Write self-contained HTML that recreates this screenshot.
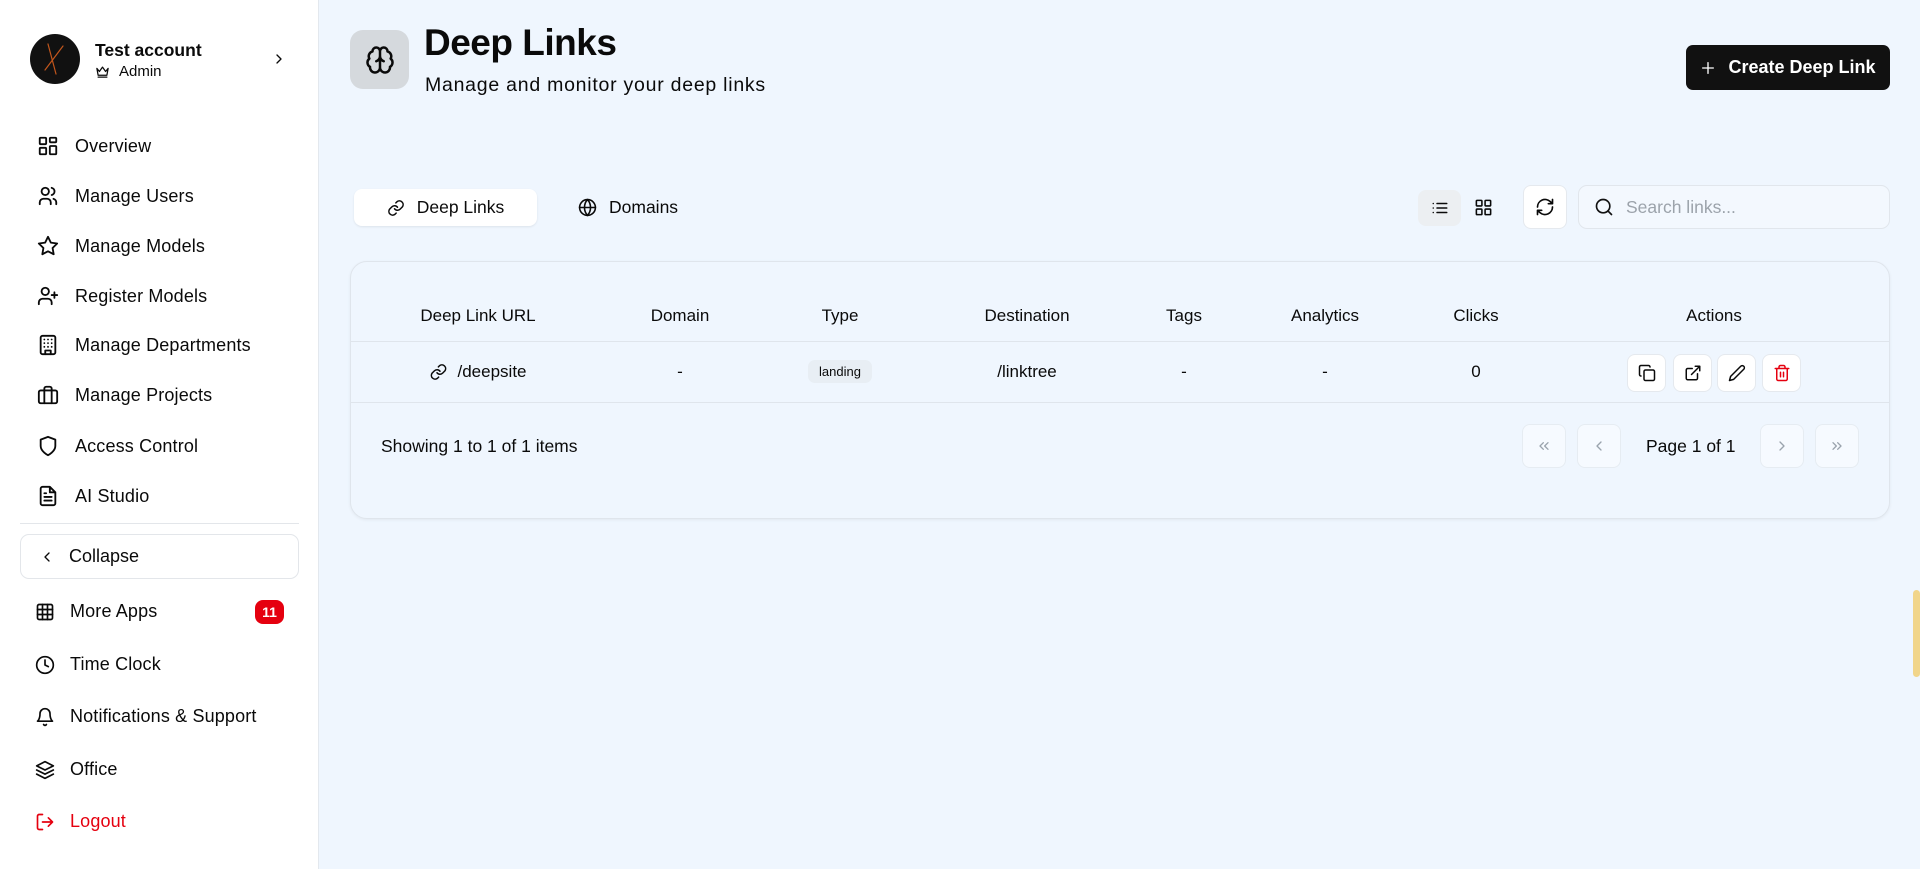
<!DOCTYPE html>
<html><head><meta charset="utf-8"><style>
*{box-sizing:border-box;margin:0;padding:0}
body{width:1920px;height:869px;overflow:hidden;background:#eff6fe;font-family:"Liberation Sans",sans-serif;color:#0a0a0a;position:relative}
.a{position:absolute}
.side{left:0;top:0;width:319px;height:869px;background:#fff;border-right:1px solid #e3e8ee}
svg{fill:none;stroke:currentColor;stroke-width:2;stroke-linecap:round;stroke-linejoin:round}
.nav{left:37px;height:24px;display:flex;align-items:center;font-size:18px;letter-spacing:0.15px}
.nav svg{width:22px;height:22px;margin-right:16px}
.nav2{left:35px;display:flex;align-items:center;font-size:18px;font-weight:500;letter-spacing:0.15px}
.nav2 svg{width:20px;height:20px;margin-right:15px}
.th{top:306px;font-size:17px;font-weight:500;transform:translateX(-50%);white-space:nowrap}
.td{top:362px;font-size:17px;transform:translateX(-50%);white-space:nowrap}
.btn{background:#fff;border:1px solid #e5e9ee;border-radius:8px;display:flex;align-items:center;justify-content:center}
.pg{background:#f6faff;border:1px solid #e6ecf2;border-radius:8px;width:44px;height:44px;top:424px;display:flex;align-items:center;justify-content:center;color:#9aa3ad}
</style></head><body>
<div class="a side"></div>
<div class="a" style="left:30px;top:34px;width:50px;height:50px;border-radius:50%;background:#111"><svg width="50" height="50" viewBox="0 0 50 50" style="stroke:#c2561c;stroke-width:1.2"><path d="M18 10 L26 40 M33 12 L15 36"/></svg></div>
<div class="a" style="left:95px;top:40px;font-size:17.5px;font-weight:700">Test account</div>
<div class="a" style="left:95px;top:63px;font-size:15px;display:flex;align-items:center"><svg width="15" height="15" viewBox="0 0 24 24"><path d="M3 7l4 5 5-7 5 7 4-5-2 11H5z M5 21h14"/></svg><span style="margin-left:9px">Admin</span></div>
<svg class="a" style="left:271px;top:51px" width="16" height="16" viewBox="0 0 24 24"><path d="M9 6l6 6-6 6"/></svg>

<div class="a nav" style="top:134px"><svg viewBox="0 0 24 24"><rect x="3" y="3" width="7" height="7" rx="1"/><rect x="14" y="3" width="7" height="5" rx="1"/><rect x="14" y="12" width="7" height="9" rx="1"/><rect x="3" y="14" width="7" height="7" rx="1"/></svg>Overview</div>
<div class="a nav" style="top:184px"><svg viewBox="0 0 24 24"><circle cx="9" cy="7" r="4"/><path d="M3 21v-2a4 4 0 014-4h4a4 4 0 014 4v2M16 3.1a4 4 0 010 7.8M21 21v-2a4 4 0 00-3-3.9"/></svg>Manage Users</div>
<div class="a nav" style="top:234px"><svg viewBox="0 0 24 24"><path d="M12 2l3.1 6.3 6.9 1-5 4.9 1.2 6.8L12 17.8 5.8 21l1.2-6.8-5-4.9 6.9-1z"/></svg>Manage Models</div>
<div class="a nav" style="top:284px"><svg viewBox="0 0 24 24"><circle cx="9" cy="7" r="4"/><path d="M2 21v-2a4 4 0 014-4h6a4 4 0 014 4v2M19 8v6M16 11h6"/></svg>Register Models</div>
<div class="a nav" style="top:333px"><svg viewBox="0 0 24 24"><rect x="4" y="2" width="16" height="20" rx="2"/><path d="M9 22v-4h6v4M8 6h.01M12 6h.01M16 6h.01M8 10h.01M12 10h.01M16 10h.01M8 14h.01M12 14h.01M16 14h.01"/></svg>Manage Departments</div>
<div class="a nav" style="top:383px"><svg viewBox="0 0 24 24"><rect x="2" y="7" width="20" height="14" rx="2"/><path d="M16 21V5a2 2 0 00-2-2h-4a2 2 0 00-2 2v16"/></svg>Manage Projects</div>
<div class="a nav" style="top:434px"><svg viewBox="0 0 24 24"><path d="M12 22s8-4 8-10V5l-8-3-8 3v7c0 6 8 10 8 10z"/></svg>Access Control</div>
<div class="a nav" style="top:484px"><svg viewBox="0 0 24 24"><path d="M14 2H6a2 2 0 00-2 2v16a2 2 0 002 2h12a2 2 0 002-2V8z M14 2v6h6 M16 13H8 M16 17H8 M10 9H8"/></svg>AI Studio</div>
<div class="a" style="left:20px;top:523px;width:279px;height:1px;background:#e3e6ea"></div>
<div class="a" style="left:20px;top:534px;width:279px;height:45px;border:1px solid #e3e6ea;border-radius:9px;display:flex;align-items:center;padding-left:18px;font-size:18px;font-weight:500"><svg width="16" height="16" viewBox="0 0 24 24"><path d="M15 6l-6 6 6 6"/></svg><span style="margin-left:14px">Collapse</span></div>
<div class="a nav2" style="top:601px"><svg viewBox="0 0 24 24"><rect x="3" y="3" width="18" height="18" rx="2"/><path d="M3 9h18M3 15h18M9 3v18M15 3v18"/></svg>More Apps</div>
<div class="a" style="left:255px;top:600px;width:29px;height:24px;border-radius:8px;background:#e5000f;color:#fff;font-size:14px;font-weight:700;display:flex;align-items:center;justify-content:center">11</div>
<div class="a nav2" style="top:654px"><svg viewBox="0 0 24 24"><circle cx="12" cy="12" r="10"/><path d="M12 6v6l4 2"/></svg>Time Clock</div>
<div class="a nav2" style="top:706px"><svg viewBox="0 0 24 24"><path d="M6 8a6 6 0 0112 0c0 7 3 9 3 9H3s3-2 3-9 M10.3 21a1.9 1.9 0 003.4 0"/></svg>Notifications &amp; Support</div>
<div class="a nav2" style="top:759px"><svg viewBox="0 0 24 24"><path d="M12 2l10 5-10 5L2 7z M2 12l10 5 10-5 M2 17l10 5 10-5"/></svg>Office</div>
<div class="a nav2" style="top:811px;color:#e5000f"><svg viewBox="0 0 24 24"><path d="M9 21H5a2 2 0 01-2-2V5a2 2 0 012-2h4 M16 17l5-5-5-5 M21 12H9"/></svg>Logout</div>

<div class="a" style="left:350px;top:30px;width:59px;height:59px;border-radius:13px;background:#d5d9dd;display:flex;align-items:center;justify-content:center"><svg width="30" height="30" viewBox="0 0 24 24"><path d="M12 5a3 3 0 10-5.997.125 4 4 0 00-2.526 5.77 4 4 0 00.556 6.588A4 4 0 1012 18z M12 5a3 3 0 115.997.125 4 4 0 012.526 5.77 4 4 0 01-.556 6.588A4 4 0 1112 18z M12 5v13 M9 13a4.5 4.5 0 003-4 M15 13a4.5 4.5 0 01-3-4"/></svg></div>
<div class="a" style="left:424px;top:22px;font-size:37px;font-weight:700;letter-spacing:-0.5px">Deep Links</div>
<div class="a" style="left:425px;top:74px;font-size:19.5px;letter-spacing:0.75px">Manage and monitor your deep links</div>
<div class="a" style="left:1686px;top:45px;width:204px;height:45px;border-radius:7px;background:#111;color:#fff;font-size:18px;font-weight:600;display:flex;align-items:center;justify-content:center"><svg width="16" height="16" viewBox="0 0 24 24" style="margin-right:12px"><path d="M12 4v16M4 12h16"/></svg>Create Deep Link</div>

<div class="a" style="left:354px;top:189px;width:183px;height:37px;background:#fff;border-radius:8px;box-shadow:0 1px 2px rgba(0,0,0,.08);display:flex;align-items:center;justify-content:center;font-size:17.5px;font-weight:500"><svg width="18" height="18" viewBox="0 0 24 24"><path d="M10 13a5 5 0 007.5.5l3-3a5 5 0 00-7-7l-1.7 1.7 M14 11a5 5 0 00-7.5-.5l-3 3a5 5 0 007 7l1.7-1.7"/></svg><span style="margin-left:12px">Deep Links</span></div>
<div class="a" style="left:578px;top:197px;display:flex;align-items:center;font-size:17.5px;font-weight:500"><svg width="19" height="19" viewBox="0 0 24 24"><circle cx="12" cy="12" r="10"/><path d="M2 12h20M12 2a15 15 0 010 20M12 2a15 15 0 000 20"/></svg><span style="margin-left:12px">Domains</span></div>

<div class="a" style="left:1418px;top:190px;width:43px;height:36px;border-radius:8px;background:#eceff2;display:flex;align-items:center;justify-content:center"><svg width="18" height="18" viewBox="0 0 24 24"><path d="M8 6h13M8 12h13M8 18h13M3 6h.01M3 12h.01M3 18h.01"/></svg></div>
<svg class="a" style="left:1474px;top:198px" width="19" height="19" viewBox="0 0 24 24"><rect x="3" y="3" width="7" height="7" rx="1"/><rect x="14" y="3" width="7" height="7" rx="1"/><rect x="3" y="14" width="7" height="7" rx="1"/><rect x="14" y="14" width="7" height="7" rx="1"/></svg>
<div class="a btn" style="left:1523px;top:185px;width:44px;height:44px"><svg width="20" height="20" viewBox="0 0 24 24"><path d="M3 12a9 9 0 0115-6.7L21 8 M21 3v5h-5 M21 12a9 9 0 01-15 6.7L3 16 M8 16H3v5"/></svg></div>
<div class="a" style="left:1578px;top:185px;width:312px;height:44px;border:1px solid #e1e6ec;border-radius:9px;background:#f3f8fe;display:flex;align-items:center;padding-left:15px;font-size:17.5px;color:#9ca3ab"><svg width="20" height="20" viewBox="0 0 24 24" style="color:#111"><circle cx="11" cy="11" r="8"/><path d="M21 21l-4.3-4.3"/></svg><span style="margin-left:12px">Search links...</span></div>

<div class="a" style="left:350px;top:261px;width:1540px;height:258px;border:1px solid #dfe5ec;border-radius:17px;background:#eff6fe;box-shadow:0 1px 3px rgba(0,0,0,.06)"></div>
<div class="a" style="left:351px;top:341px;width:1538px;height:1px;background:#dfe5ec"></div>
<div class="a" style="left:351px;top:402px;width:1538px;height:1px;background:#dfe5ec"></div>
<div class="a th" style="left:478px">Deep Link URL</div>
<div class="a th" style="left:680px">Domain</div>
<div class="a th" style="left:840px">Type</div>
<div class="a th" style="left:1027px">Destination</div>
<div class="a th" style="left:1184px">Tags</div>
<div class="a th" style="left:1325px">Analytics</div>
<div class="a th" style="left:1476px">Clicks</div>
<div class="a th" style="left:1714px">Actions</div>
<div class="a td" style="left:478px;display:flex;align-items:center;font-weight:500"><svg width="18" height="18" viewBox="0 0 24 24"><path d="M10 13a5 5 0 007.5.5l3-3a5 5 0 00-7-7l-1.7 1.7 M14 11a5 5 0 00-7.5-.5l-3 3a5 5 0 007 7l1.7-1.7"/></svg><span style="margin-left:10px">/deepsite</span></div>
<div class="a td" style="left:680px">-</div>
<div class="a" style="left:808px;top:360px;width:64px;height:23px;border-radius:7px;background:#e8eef4;font-size:13px;font-weight:500;display:flex;align-items:center;justify-content:center">landing</div>
<div class="a td" style="left:1027px">/linktree</div>
<div class="a td" style="left:1184px">-</div>
<div class="a td" style="left:1325px">-</div>
<div class="a td" style="left:1476px">0</div>
<div class="a btn" style="left:1627px;top:354px;width:39px;height:38px"><svg width="18" height="18" viewBox="0 0 24 24"><rect x="8" y="8" width="14" height="14" rx="2"/><path d="M4 16c-1.1 0-2-.9-2-2V4c0-1.1.9-2 2-2h10c1.1 0 2 .9 2 2"/></svg></div>
<div class="a btn" style="left:1673px;top:354px;width:39px;height:38px"><svg width="18" height="18" viewBox="0 0 24 24"><path d="M15 3h6v6M10 14L21 3M18 13v6a2 2 0 01-2 2H5a2 2 0 01-2-2V8a2 2 0 012-2h6"/></svg></div>
<div class="a btn" style="left:1717px;top:354px;width:39px;height:38px"><svg width="18" height="18" viewBox="0 0 24 24"><path d="M17 3a2.8 2.8 0 014 4L7.5 20.5 2 22l1.5-5.5z"/></svg></div>
<div class="a btn" style="left:1762px;top:354px;width:39px;height:38px;color:#e5000f"><svg width="18" height="18" viewBox="0 0 24 24"><path d="M3 6h18M19 6v14a2 2 0 01-2 2H7a2 2 0 01-2-2V6M8 6V4a2 2 0 012-2h4a2 2 0 012 2v2M10 11v6M14 11v6"/></svg></div>
<div class="a" style="left:381px;top:436px;font-size:17.5px">Showing 1 to 1 of 1 items</div>
<div class="a pg" style="left:1522px"><svg width="16" height="16" viewBox="0 0 24 24"><path d="M11 17l-5-5 5-5M18 17l-5-5 5-5"/></svg></div>
<div class="a pg" style="left:1577px"><svg width="16" height="16" viewBox="0 0 24 24"><path d="M15 18l-6-6 6-6"/></svg></div>
<div class="a" style="left:1646px;top:436px;font-size:17.5px">Page 1 of 1</div>
<div class="a pg" style="left:1760px"><svg width="16" height="16" viewBox="0 0 24 24"><path d="M9 18l6-6-6-6"/></svg></div>
<div class="a pg" style="left:1815px"><svg width="16" height="16" viewBox="0 0 24 24"><path d="M13 17l5-5-5-5M6 17l5-5-5-5"/></svg></div>
<div class="a" style="left:1913px;top:590px;width:7px;height:87px;border-radius:4px;background:#f1d58a"></div>
</body></html>
